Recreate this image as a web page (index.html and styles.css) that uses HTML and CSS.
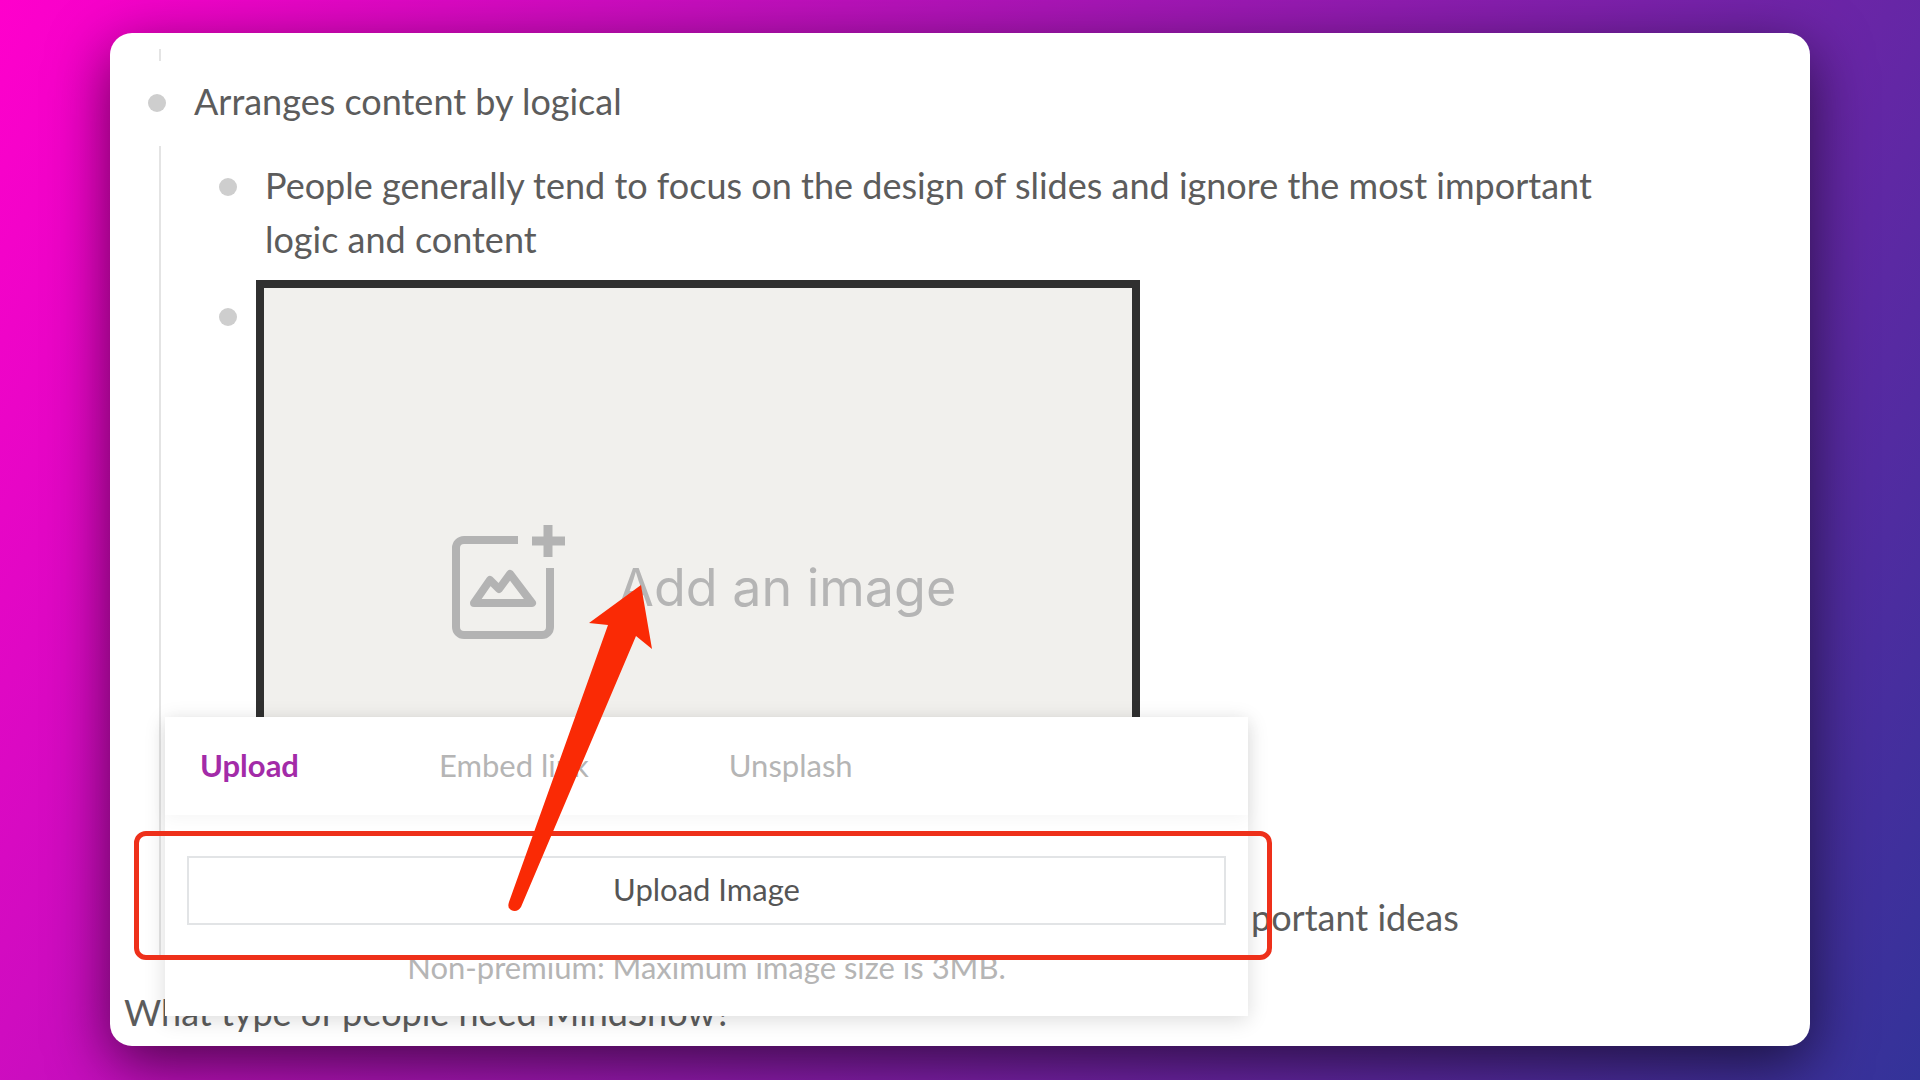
FILE: index.html
```html
<!DOCTYPE html>
<html lang="en">
  <head>
    <meta charset="utf-8" />
    <meta name="viewport" content="width=device-width" />
    <title>Add an image</title>
    <link rel="stylesheet" href="styles.css">
  </head>
  <body>
    <main class="card">
      <div class="line-stub"></div>
      <div class="node root">
        <span class="bullet"></span>
        <p>Arranges content by logical</p>
      </div>

      <div class="children">
        <div class="node">
          <span class="bullet"></span>
          <p>People generally tend to focus on the design of slides and ignore the most important logic and content</p>
        </div>
        <div class="node">
          <span class="bullet image-bullet"></span>
          <div class="image-slot">
            <svg class="add-icon" width="120" height="120" viewBox="0 0 120 120" fill="none" stroke="#b3b3b3" stroke-width="8">
              <path d="M72 20H18a8 8 0 0 0-8 8v79a8 8 0 0 0 8 8h78a8 8 0 0 0 8-8V48" />
              <path d="M102 5v32M86 21h33" stroke-width="9" />
              <path d="M28 83L44 60l9 9L64 54l22 29z" stroke-linejoin="round" />
            </svg>
            <span>Add an image</span>
          </div>
        </div>
        <div class="node behind">
          <p>portant ideas</p>
        </div>
      </div>

      <p class="next">What type of people need MindShow?</p>

      <section class="popup">
        <nav class="tabs">
          <button class="tab active" type="button">Upload</button>
          <button class="tab" type="button">Embed link</button>
          <button class="tab" type="button">Unsplash</button>
        </nav>
        <div class="panel">
          <button class="upload" type="button">Upload Image</button>
          <p class="hint">Non-premium: Maximum image size is 3MB.</p>
        </div>

        <!-- callout: frame round the button, arrow up to the image slot -->
        <div class="frame"></div>
        <svg class="arrow" width="152" height="332" viewBox="504 582 152 332">
          <path fill="#fa2a05" d="M641 585L652 649L636 636L521 907Q517 913 511 910Q507 908 509 902L608 625L589 623Z" />
        </svg>
      </section>
    </main>
  </body>
</html>
```

FILE: styles.css
```css
* {
  box-sizing: border-box;
}

body {
  margin: 0;
  min-height: 100vh;
  padding: 33px 110px 34px;
  background: linear-gradient(120deg, #ff00cc, #333399);
  font-family: Lato, "Open Sans", sans-serif;
  font-size: 36px;
  line-height: 54px;
  color: #5c5c5c;
}

p {
  margin: 0;
}

button {
  font: inherit;
  cursor: pointer;
}

.card {
  position: relative; /* the popup is placed against the card */
  padding: 16px 14px 7px;
  border-radius: 22px;
  background: #fff;
  box-shadow: 0 18px 60px rgba(0, 0, 0, 0.6);
}

/* outline */
.line-stub {
  width: 2px;
  height: 12px;
  margin-left: 35px;
  background: #e4e4e4;
}

.node {
  display: flex;
  align-items: flex-start;
  gap: 28px;
}

.root {
  height: 85px;
  margin-left: 24px;
  padding-top: 13px;
}

.bullet {
  flex: none;
  width: 18px;
  height: 18px;
  margin-top: 20px;
  border-radius: 50%;
  background: #cecece;
}

.children {
  display: flex;
  flex-direction: column;
  gap: 14px;
  margin-left: 35px;
  padding: 12px 200px 13px 58px;
  border-left: 2px solid #e4e4e4;
}

.image-bullet {
  margin-top: 28px;
  margin-right: -9px;
}

.image-slot {
  display: flex;
  align-items: flex-start;
  gap: 52px;
  width: 884px;
  height: 596px;
  padding: 232px 0 0 182px;
  border: 8px solid #303030;
  background: #f1f0ed;
  color: #b5b5b5;
  font-family: Inter, sans-serif;
  font-size: 52px;
}

.image-slot span {
  padding-top: 36px;
  line-height: 64px;
}

.behind {
  padding-left: 1032px;
  white-space: nowrap;
}

.next {
  margin-top: 28px;
}

/* image picker */
.popup {
  position: absolute;
  top: 684px;
  left: 55px;
  width: 1083px;
  height: 299px;
  background: #fff;
  box-shadow: 0 4px 20px rgba(0, 0, 0, 0.14);
  font-size: 31px;
  line-height: 40px;
}

.tabs {
  display: flex;
  gap: 140px;
  height: 98px;
  padding: 0 35px 2px;
  box-shadow: 0 4px 16px rgba(0, 0, 0, 0.04);
}

.tab {
  padding: 0;
  border: 0;
  background: none;
  color: #b5b5b5;
}

.tab.active {
  color: #a32ba8;
  font-weight: bold;
}

.panel {
  padding: 41px 22px 0;
  text-align: center;
}

.upload {
  width: 100%;
  height: 69px;
  padding: 0 0 4px;
  border: 2px solid #e2e4e6;
  background: #fff;
  color: #555;
}

.hint {
  margin-top: 22px;
  color: #b5b5b5;
}

.frame {
  position: absolute;
  top: 114px;
  left: -31px;
  right: -24px;
  height: 129px;
  border: 5px solid #ee301a;
  border-radius: 12px;
  pointer-events: none;
}

.arrow {
  position: absolute;
  top: -135px;
  left: 339px;
  pointer-events: none;
}
```
